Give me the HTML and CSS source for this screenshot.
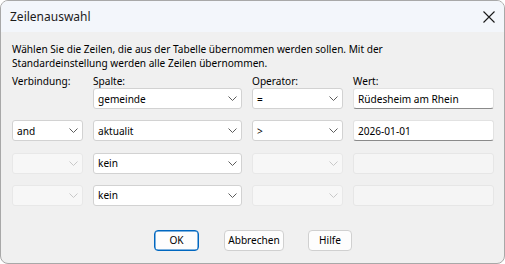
FILE: index.html
```html
<!DOCTYPE html>
<html lang="de">
<head>
<meta charset="utf-8">
<title>Zeilenauswahl</title>
<link rel="stylesheet" href="styles.css">
</head>
<body>
<div class="dialog">
  <div class="titlebar">
    <span class="title">Zeilenauswahl</span>
    <svg class="close" width="12" height="12" viewBox="0 0 12 12"><path d="M0.5 0.5 L11.5 11.5 M11.5 0.5 L0.5 11.5" stroke="#1a1a1a" stroke-width="1.1" fill="none"/></svg>
  </div>
  <div class="content">
    <p class="desc">Wählen Sie die Zeilen, die aus der Tabelle übernommen werden sollen. Mit der<br>Standardeinstellung werden alle Zeilen übernommen.</p>
    <div class="labels">
      <div class="label">Verbindung:</div>
      <div class="label">Spalte:</div>
      <div class="label">Operator:</div>
      <div class="label">Wert:</div>
    </div>
    <div class="grid">
      <div class="empty"></div>
      <div class="combo"><span>gemeinde</span><svg class="chev" width="9" height="5" viewBox="0 0 9 5"><path d="M0.5 0.5 L4.5 4.5 L8.5 0.5" stroke="#5c5c5c" fill="none"/></svg></div>
      <div class="combo"><span>=</span><svg class="chev" width="9" height="5" viewBox="0 0 9 5"><path d="M0.5 0.5 L4.5 4.5 L8.5 0.5" stroke="#5c5c5c" fill="none"/></svg></div>
      <div class="edit">Rüdesheim am Rhein</div>

      <div class="combo"><span>and</span><svg class="chev" width="9" height="5" viewBox="0 0 9 5"><path d="M0.5 0.5 L4.5 4.5 L8.5 0.5" stroke="#5c5c5c" fill="none"/></svg></div>
      <div class="combo"><span>aktualit</span><svg class="chev" width="9" height="5" viewBox="0 0 9 5"><path d="M0.5 0.5 L4.5 4.5 L8.5 0.5" stroke="#5c5c5c" fill="none"/></svg></div>
      <div class="combo"><span>&gt;</span><svg class="chev" width="9" height="5" viewBox="0 0 9 5"><path d="M0.5 0.5 L4.5 4.5 L8.5 0.5" stroke="#5c5c5c" fill="none"/></svg></div>
      <div class="edit">2026-01-01</div>

      <div class="combo disabled"><span></span><svg class="chev" width="9" height="5" viewBox="0 0 9 5"><path d="M0.5 0.5 L4.5 4.5 L8.5 0.5" stroke="#c8c8c8" fill="none"/></svg></div>
      <div class="combo"><span>kein</span><svg class="chev" width="9" height="5" viewBox="0 0 9 5"><path d="M0.5 0.5 L4.5 4.5 L8.5 0.5" stroke="#5c5c5c" fill="none"/></svg></div>
      <div class="combo disabled"><span></span><svg class="chev" width="9" height="5" viewBox="0 0 9 5"><path d="M0.5 0.5 L4.5 4.5 L8.5 0.5" stroke="#c8c8c8" fill="none"/></svg></div>
      <div class="edit disabled"></div>

      <div class="combo disabled"><span></span><svg class="chev" width="9" height="5" viewBox="0 0 9 5"><path d="M0.5 0.5 L4.5 4.5 L8.5 0.5" stroke="#c8c8c8" fill="none"/></svg></div>
      <div class="combo"><span>kein</span><svg class="chev" width="9" height="5" viewBox="0 0 9 5"><path d="M0.5 0.5 L4.5 4.5 L8.5 0.5" stroke="#5c5c5c" fill="none"/></svg></div>
      <div class="combo disabled"><span></span><svg class="chev" width="9" height="5" viewBox="0 0 9 5"><path d="M0.5 0.5 L4.5 4.5 L8.5 0.5" stroke="#c8c8c8" fill="none"/></svg></div>
      <div class="edit disabled"></div>
    </div>
    <div class="buttons">
      <button class="btn default btn-ok">OK</button>
      <button class="btn btn-cancel">Abbrechen</button>
      <button class="btn btn-help">Hilfe</button>
    </div>
  </div>
</div>
</body>
</html>
```
FILE: styles.css
```css
html, body {
  margin: 0;
  padding: 0;
  background: #ffffff;
}
body {
  font-family: "Noto Sans", "Open Sans", sans-serif;
  font-size: 10.1px;
  color: #000;
}
.dialog {
  width: 505px;
  height: 264px;
  box-sizing: border-box;
  border: 1px solid #a8a8a8;
  border-radius: 8px;
  overflow: hidden;
  background: #f0f0f0;
  display: flex;
  flex-direction: column;
}
.titlebar {
  height: 31px;
  flex: none;
  background: #f3f6fb;
  display: flex;
  align-items: center;
  justify-content: space-between;
  padding: 0 9px 0 9px;
}
.title {
  font-size: 12px;
  color: #1b1b1b;
}
.close {
  margin-top: 1px;
}
.content {
  padding: 11px 11px 0 11px;
  display: flex;
  flex-direction: column;
}
.desc {
  margin: 0;
  line-height: 13.5px;
  color: #000;
}
.labels,
.grid {
  display: grid;
  grid-template-columns: 71px 149px 91px 141px;
  column-gap: 10px;
}
.labels {
  margin-top: 4px;
  line-height: 14px;
}
.grid {
  margin-top: 0;
  grid-auto-rows: 21px;
  row-gap: 11.3px;
}
.combo {
  box-sizing: border-box;
  background: #ffffff;
  border: 1px solid #d2d2d2;
  border-radius: 3px;
  display: flex;
  align-items: center;
  justify-content: space-between;
  padding: 0 4px 0 4px;
  height: 21px;
}
.combo .chev {
  flex: none;
}
.combo.disabled {
  background: #f7f7f7;
  border-color: #e8e8e8;
}
.edit {
  box-sizing: border-box;
  height: 21px;
  background: #ffffff;
  border: 1px solid #e2e2e2;
  border-bottom: 1px solid #8a8a8a;
  border-radius: 3px;
  padding: 0 4px;
  display: flex;
  align-items: center;
}
.edit.disabled {
  background: #f5f5f5;
  border-color: #e6e6e6;
}
.buttons {
  margin-top: 24px;
  display: flex;
  padding-left: 142px;
}
.btn {
  font-family: inherit;
  font-size: 10.1px;
  height: 21px;
  box-sizing: border-box;
  background: #fdfdfd;
  border: 1px solid #d0d0d0;
  border-radius: 4px;
  padding: 0;
  color: #000;
}
.btn-ok {
  width: 45px;
}
.btn-cancel {
  width: 60px;
  margin-left: 25px;
}
.btn-help {
  width: 44px;
  margin-left: 24px;
}
.btn.default {
  border: 1px solid #0067c0;
  box-shadow: inset 0 0 0 0.5px #0067c0;
}
```
